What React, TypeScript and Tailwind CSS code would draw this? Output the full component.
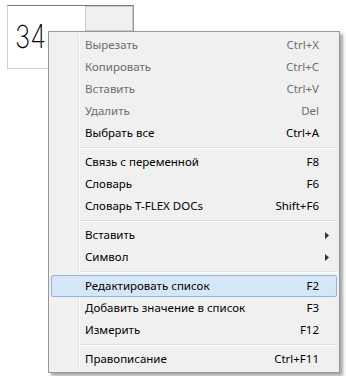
import React from 'react';

type Item =
    | { kind: 'item'; label: string; shortcut?: string; disabled?: boolean; submenu?: boolean; active?: boolean }
    | { kind: 'sep' };

const items: Item[] = [
    { kind: 'item', label: 'Вырезать', shortcut: 'Ctrl+X', disabled: true },
    { kind: 'item', label: 'Копировать', shortcut: 'Ctrl+C', disabled: true },
    { kind: 'item', label: 'Вставить', shortcut: 'Ctrl+V', disabled: true },
    { kind: 'item', label: 'Удалить', shortcut: 'Del', disabled: true },
    { kind: 'item', label: 'Выбрать все', shortcut: 'Ctrl+A' },
    { kind: 'sep' },
    { kind: 'item', label: 'Связь с переменной', shortcut: 'F8' },
    { kind: 'item', label: 'Словарь', shortcut: 'F6' },
    { kind: 'item', label: 'Словарь T-FLEX DOCs', shortcut: 'Shift+F6' },
    { kind: 'sep' },
    { kind: 'item', label: 'Вставить', submenu: true },
    { kind: 'item', label: 'Символ', submenu: true },
    { kind: 'sep' },
    { kind: 'item', label: 'Редактировать список', shortcut: 'F2', active: true },
    { kind: 'item', label: 'Добавить значение в список', shortcut: 'F3' },
    { kind: 'item', label: 'Измерить', shortcut: 'F12' },
    { kind: 'sep' },
    { kind: 'item', label: 'Правописание', shortcut: 'Ctrl+F11' },
];

// контекстное меню поверх ячейки
const ContextMenu: React.FC = () => (
    <div className="absolute left-[48px] top-[31px] w-[292px] bg-[#f0f0f0] border border-[#979797] shadow-[3px_3px_3px_rgba(0,0,0,0.35)] p-[2px]">
        <div className="absolute left-[29px] top-[2px] bottom-[2px] w-[2px] border-l border-[#e2e3e3] bg-white/80" />
        <div className="relative flex flex-col">
            {items.map((it, i) =>
                it.kind === 'sep' ? (
                    <div key={i} className="h-[7px] pl-[29px] flex items-center">
                        <div className="w-full h-[2px] border-t border-[#e0e0e0] bg-white" />
                    </div>
                ) : (
                    <div
                        key={i}
                        className={
                            'h-[22px] flex items-center text-[11.5px] ' +
                            (it.disabled ? 'text-[#6d6d6d] ' : 'text-black ') +
                            (it.active
                                ? 'bg-[#d5e6f6] border border-[#8fb6e0] rounded-[2px] pl-[33px] pr-[17px]'
                                : 'pl-[34px] pr-[18px]')
                        }
                    >
                        <span className="flex-1">{it.label}</span>
                        {it.shortcut && <span>{it.shortcut}</span>}
                        {it.submenu && (
                            <svg width="4" height="7" viewBox="0 0 4 7" className="mr-[-10px]">
                                <path d="M0 0 L4 3.5 L0 7 Z" fill="#333" />
                            </svg>
                        )}
                    </div>
                )
            )}
        </div>
    </div>
);

export default function App() {
    return (
        <div
            className="relative w-[346px] h-[376px] bg-white overflow-hidden pl-[7px] pt-[5px]"
            style={{ fontFamily: '"Noto Sans", "Open Sans", sans-serif' }}
        >
            <div className="w-[127px] h-[64px] flex items-start justify-between border border-t-[#777] border-r-[#999] border-l-[#cfcfcf] border-b-[#cfcfcf] bg-white">
                <div
                    className="mt-[15px] ml-[7px] text-[32px] leading-none font-extralight text-black origin-left scale-x-[0.8]"
                    style={{ fontFamily: 'Inter, "DejaVu Sans", sans-serif' }}
                >
                    34
                </div>
                <div className="w-[48px] h-[25px] bg-[#f0f0f0] border border-[#c9c9c9]" />
            </div>
            <ContextMenu />
        </div>
    );
}
